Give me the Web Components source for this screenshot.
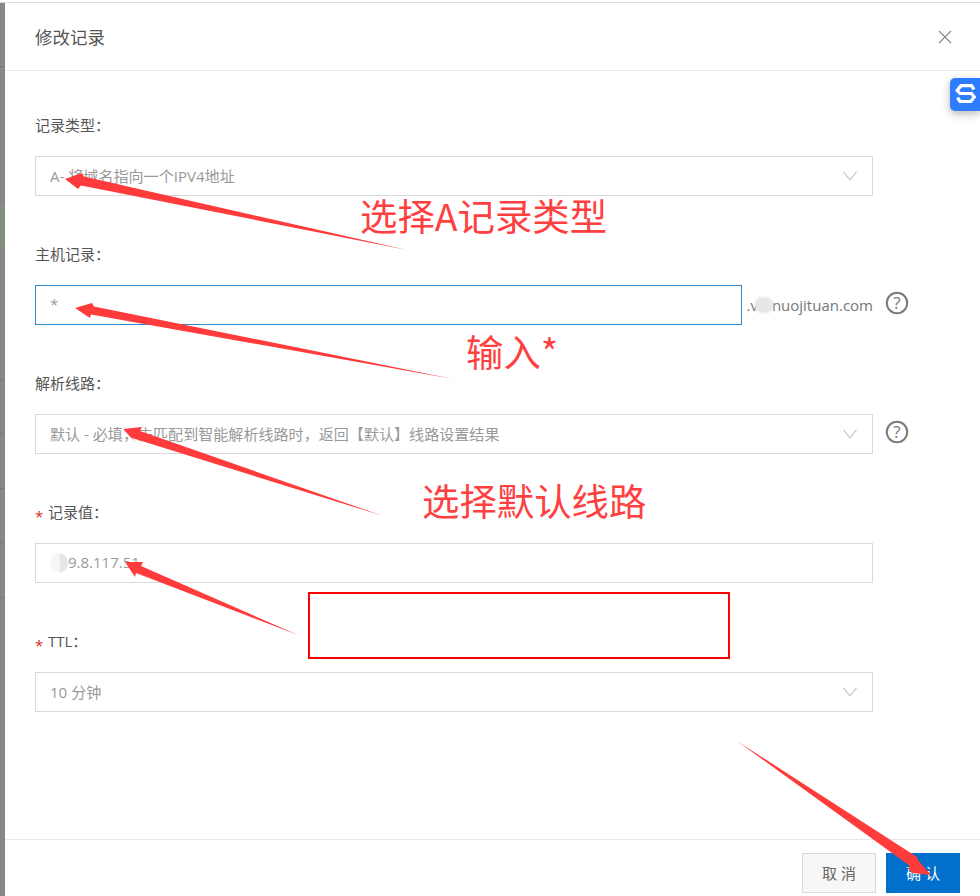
<!DOCTYPE html>
<html lang="zh">
<head>
<meta charset="utf-8">
<title>修改记录</title>
<style>
html,body{margin:0;padding:0;background:#fff}
body{font-family:"Open Sans","Noto Sans CJK SC",sans-serif;width:980px;height:896px;overflow:hidden}
</style>
</head>
<body>
<record-page>
  <record-dialog title-text="修改记录">
    <form-row label="记录类型：">
      <select-box>A- 将域名指向一个IPV4地址</select-box>
    </form-row>
    <form-row label="主机记录：">
      <text-box focused width="707">*</text-box>
      <domain-suffix></domain-suffix>
      <help-icon></help-icon>
    </form-row>
    <form-row label="解析线路：">
      <select-box>默认 - 必填，未匹配到智能解析线路时，返回【默认】线路设置结果</select-box>
      <help-icon></help-icon>
    </form-row>
    <form-row label="记录值：" required>
      <text-box masked>9.8.117.51</text-box>
    </form-row>
    <form-row label="TTL：" required>
      <select-box>10 分钟</select-box>
    </form-row>
  </record-dialog>
  <side-badge></side-badge>
  <annotation-layer></annotation-layer>
</record-page>

<script>
function shadow(el, html){
  const r = el.attachShadow({mode:'open'});
  r.innerHTML = html;
  return r;
}
const CJK = '"Open Sans","Noto Sans CJK SC",sans-serif';

customElements.define('record-page', class extends HTMLElement{
  constructor(){super();shadow(this,`
    <style>
      :host{display:grid;grid-template-columns:5px 1fr;grid-template-rows:3px 1fr;width:980px;height:896px;position:relative;overflow:hidden;background:#fff}
      .strip{background:
        linear-gradient(#7a7a7a,#7a7a7a) 0 63px/5px 1px no-repeat,
        linear-gradient(#797979,#797979) 0 377px/5px 1px no-repeat,
        linear-gradient(#797979,#797979) 0 430px/5px 1px no-repeat,
        linear-gradient(#797979,#797979) 0 485px/5px 1px no-repeat,
        linear-gradient(#797979,#797979) 0 539px/5px 1px no-repeat,
        linear-gradient(#797979,#797979) 0 594px/5px 1px no-repeat,
        linear-gradient(#84907f,#84907f) 0 201px/5px 41px no-repeat,
        #878787}
      .top{grid-column:1/3;height:3px;background:linear-gradient(#fff 2px,#dcdcdc 2px)}
    </style>
    <div class="top"></div>
    <div class="strip"></div>
    <slot></slot>`);}
});

customElements.define('record-dialog', class extends HTMLElement{
  constructor(){super();shadow(this,`
    <style>
      :host{display:flex;flex-direction:column;min-width:0;background:#fff;font-family:${CJK};color:#555}
      header{box-sizing:border-box;border-bottom:1px solid #e6ebf0;height:68px;display:flex;align-items:center;justify-content:space-between;padding:0 28px 0 30px;flex:none}
      h2{margin:0;font-size:17.5px;font-weight:400;color:#555;line-height:24px}
      svg{display:block}
      main{flex:1;padding:45px 0 0 30px;display:flex;flex-direction:column;gap:49px}
      footer{flex:none;height:57px;box-sizing:border-box;border-top:1px solid #e8e8e8;padding:13px 20px 0 0;display:flex;justify-content:flex-end;gap:10px}
      button{width:74px;height:40px;box-sizing:border-box;font:15px/38px ${CJK};letter-spacing:0;padding:0;border:1px solid #d9d9d9;background:#f7f7f7;color:#666;cursor:pointer}
      button.primary{border-color:#0070cc;background:#0070cc;color:#fff}
    </style>
    <header><h2></h2>
      <svg width="14" height="14" viewBox="0 0 14 14" fill="none" stroke="#8a8a8a" stroke-width="1.2"><path d="M1 1l12 12M13 1L1 13"/></svg>
    </header>
    <main><slot></slot></main>
    <footer><button>取 消</button><button class="primary">确 认</button></footer>`);
    this.shadowRoot.querySelector('h2').textContent=this.getAttribute('title-text');
  }
});

customElements.define('form-row', class extends HTMLElement{
  constructor(){super();shadow(this,`
    <style>
      :host{display:block;font-size:15px;color:#555}
      .label{height:20px;line-height:19px;margin-bottom:20px;display:flex;align-items:flex-start;white-space:nowrap}
      .star{color:#d9281e;width:13px;flex:none;font-size:15px;line-height:26px}
      .row{display:flex;align-items:center;width:873px}
    </style>
    <div class="label"></div>
    <div class="row"><slot></slot></div>`);
    const l=this.shadowRoot.querySelector('.label');
    if(this.hasAttribute('required')){const s=document.createElement('span');s.className='star';s.textContent='*';l.append(s);}
    l.append(this.getAttribute('label'));
  }
});

customElements.define('select-box', class extends HTMLElement{
  constructor(){super();shadow(this,`
    <style>
      :host{display:flex;align-items:center;justify-content:space-between;box-sizing:border-box;flex:none;width:838px;height:40px;border:1px solid #d9d9d9;padding:0 15px 2px 14px;font-size:15.07px;color:#999;background:#fff;white-space:nowrap}
      svg{display:block;flex:none;position:relative;top:1px}
    </style>
    <span><slot></slot></span>
    <svg width="14" height="10" viewBox="0 0 14 10" fill="none" stroke="#c4c4c4" stroke-width="1.1"><path d="M.5 .8L7 8.8 13.5 .8"/></svg>`);}
});

customElements.define('text-box', class extends HTMLElement{
  constructor(){super();shadow(this,`
    <style>
      :host{display:flex;align-items:center;box-sizing:border-box;flex:none;width:838px;height:40px;border:1px solid #d9d9d9;padding:0 14px 2px;font-size:15px;color:#999;background:#fff;white-space:nowrap}
      :host([focused]){border-color:#2c88cc}
      .mask{display:none;width:18px;height:20px;border-radius:50%;background:linear-gradient(90deg,#f6f6f6 55%,#e6e6e6 55%);flex:none;margin-top:2px}
      :host([masked]) .mask{display:block}
    </style>
    <span class="mask"></span><slot></slot>`);
    if(this.hasAttribute('width')) this.style.width=this.getAttribute('width')+'px';
  }
});

customElements.define('domain-suffix', class extends HTMLElement{
  constructor(){super();shadow(this,`
    <style>
      :host{display:flex;align-items:center;justify-content:flex-end;width:131px;flex:none;font-size:15px;color:#777;white-space:nowrap}
      i{display:inline-block;width:18px;height:16px;margin:0 -1px 0 -3px;background:#e6e6e6;border-radius:7px;filter:blur(.8px)}
    </style>
    <span>.v</span><i></i><span>nuojituan.com</span>`);}
});

customElements.define('help-icon', class extends HTMLElement{
  constructor(){super();shadow(this,`
    <style>
      :host{display:block;flex:none;width:24px;height:24px;margin:0 0 4px 12px}
      svg{display:block}
      text{font:500 17px ${CJK}}
    </style>
    <svg width="24" height="24" viewBox="0 0 24 24" fill="none">
      <circle cx="12" cy="12" r="10.2" stroke="#7a7a7a" stroke-width="2"/>
      <text x="12" y="18" text-anchor="middle" fill="#7a7a7a">?</text>
    </svg>`);}
});

customElements.define('side-badge', class extends HTMLElement{
  constructor(){super();shadow(this,`
    <style>
      :host{position:absolute;left:950px;top:78px;width:30px;height:33px;background:#2e7dff;border-radius:5px 0 0 5px;box-shadow:0 3px 8px rgba(0,0,0,.28)}
      svg{display:block}
    </style>
    <svg width="30" height="33" viewBox="0 0 30 33" fill="none" stroke="#fff" stroke-width="3.2">
      <path d="M24 11.5L21.5 7.7H11L7.2 12.5 10 15.5H21.5L24.3 19 20.8 23.5H10L7.5 19.7"/>
    </svg>`);}
});

customElements.define('annotation-layer', class extends HTMLElement{
  constructor(){super();shadow(this,`
    <style>
      :host{position:absolute;inset:0;pointer-events:none;display:block}
      svg{position:absolute;left:0;top:0}
      .t{position:absolute;font:400 37.4px/48px "Noto Sans CJK SC","Liberation Sans",sans-serif;color:#ff4040;white-space:nowrap}
      .box{position:absolute;left:308px;top:592px;width:422px;height:67px;box-sizing:border-box;border:2px solid #f00}
    </style>
    <svg width="980" height="896" viewBox="0 0 980 896" fill="#ff3b3b">
      <polygon points="65,179 82,173 84,176.5 407,250 81,185.5 78,189"/>
      <polygon points="75,308 92,303 94,306.5 453,379 91,314.5 90,318"/>
      <polygon points="123,429 142,427 140,431 383,516 132,438 136,443"/>
      <polygon points="125,562 143,562 141,566 298,635 136,573 135,577"/>
      <polygon points="737,741 917,857 918,860 931,875 912,873 908,868 910,866"/>
    </svg>
    <div class="t" style="left:360px;top:191px">选择A记录类型</div>
    <div class="t" style="left:466px;top:327px">输入*</div>
    <div class="t" style="left:422px;top:476px">选择默认线路</div>
    <div class="box"></div>`);}
});
</script>
</body>
</html>
